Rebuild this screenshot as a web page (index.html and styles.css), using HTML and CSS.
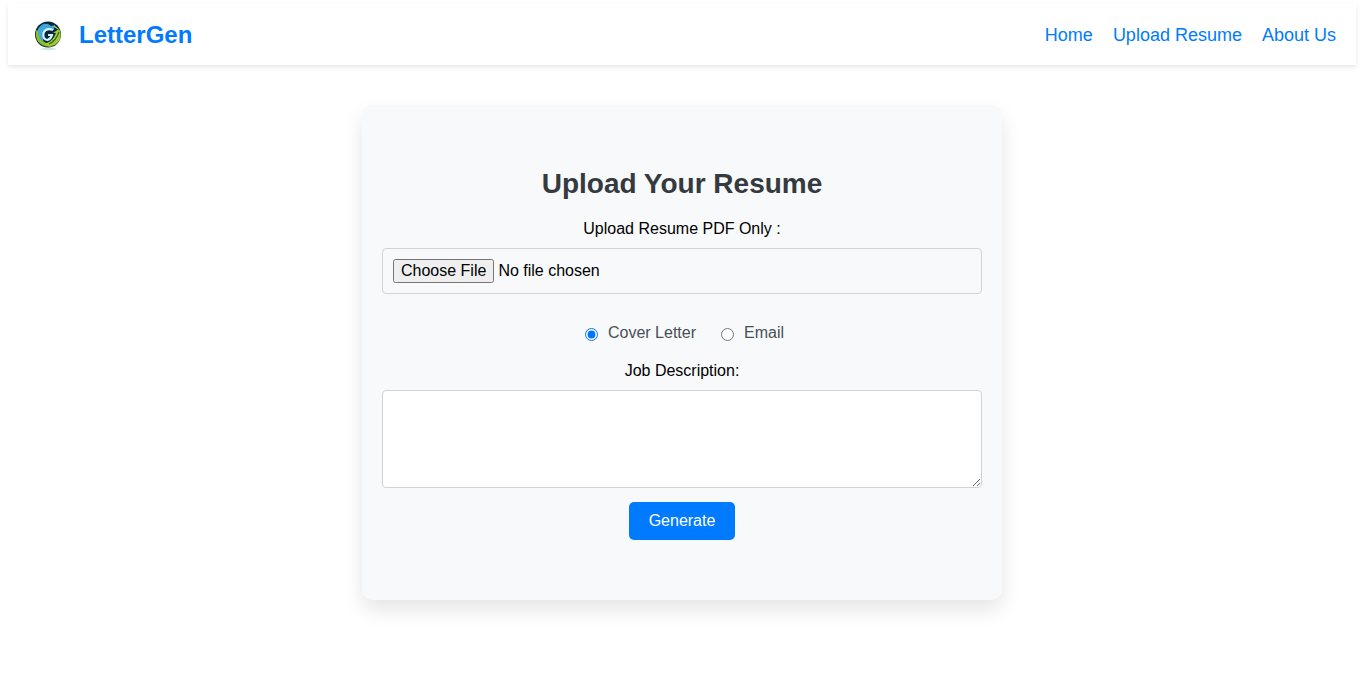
FILE: index.html
```html
<!DOCTYPE html>
<html lang="en">
<head>
<meta charset="utf-8">
<title>LetterGen</title>
<link rel="stylesheet" href="styles.css">
</head>
<body>
<header class="navbar">
  <a class="brand" href="#">
    <svg class="logo" viewBox="0 0 41 41" aria-hidden="true">
      <ellipse cx="20.500" cy="35" rx="8" ry="1.200" fill="#cfe6ea"/>
      <circle cx="20" cy="20.500" r="13" fill="#08253a"/>
      <path d="M8.500 16 L12 17 Q11 25 18 29 L24 32.500 Q14 34 9 26 Q7 20 8.500 16Z" fill="#8fbe28"/>
      <path d="M10 15 Q14 8.500 20 10 L23 12 L27 11 L26 16 Q19 14 16 19 L15 28 Q9 22 10 15Z" fill="#3fa6d8"/>
      <path d="M25 16 Q18 13.500 15.500 19 Q14.500 25.500 19.500 26 Q23 25 24 21 H20" fill="none" stroke="#d5f3fc" stroke-width="2.200"/>
      <path d="M31 15 Q34.500 21 31 27 Q27 33 20 32 L17 29.500 Q23 28 26 23 L28 19 L25 19 Z" fill="#a3cb2c"/>
      <path d="M31 18 Q28 27 21 30" fill="none" stroke="#276338" stroke-width="1.200"/>
      <path d="M26 12 L30 15" stroke="#b7cb55" stroke-width="1.200"/>
    </svg>
    <span class="brand-name">LetterGen</span>
  </a>
  <nav class="links">
    <a href="#">Home</a>
    <a href="#">Upload Resume</a>
    <a href="#">About Us</a>
  </nav>
</header>
<main class="card">
  <h1 class="title">Upload Your Resume</h1>
  <form class="form">
    <label class="label" for="resume">Upload Resume PDF Only :</label>
    <input class="file" type="file" id="resume" accept=".pdf">
    <div class="choices">
      <label class="choice"><input class="radio" type="radio" name="kind" checked><span>Cover Letter</span></label>
      <label class="choice"><input class="radio" type="radio" name="kind"><span>Email</span></label>
    </div>
    <label class="label" for="job">Job Description:</label>
    <textarea class="job" id="job" rows="4"></textarea>
    <button class="generate" type="button">Generate</button>
  </form>
</main>
</body>
</html>
```
FILE: styles.css
```css
* { box-sizing: border-box; }
body { min-height: 100vh; margin: 0; padding: 4px 6px 40px 8px; font-family: "Liberation Sans", Arial, sans-serif; font-size: 16px; background: #fff; }
.navbar { display: flex; justify-content: space-between; align-items: center; padding: 10px 20px; background: #fff; box-shadow: 0 2px 4px rgba(0,0,0,.1); }
.brand { display: flex; align-items: center; gap: 10px; text-decoration: none; color: #007bff; }
.logo { width: 41px; height: 41px; }
.brand-name { font-size: 24px; font-weight: bold; }
.links { display: flex; gap: 20px; }
.links a { color: #007bff; font-size: 18px; line-height: 22px; text-decoration: none; }
.card { max-width: 640px; margin: 40px auto 0; padding: 60px 20px; background: #f8f9fa; border-radius: 10px; box-shadow: 0 10px 20px rgba(0,0,0,.1); }
.title { margin: 0 0 16px; font-size: 28px; line-height: 38px; text-align: center; color: #343a40; }
.form { display: flex; flex-direction: column; align-items: center; }
.label { line-height: 20px; margin-bottom: 9px; }
.file { width: 100%; padding: 10px; border: 1px solid #ced4da; border-radius: 4px; font: inherit; }
.choices { display: flex; gap: 20px; margin: 30px 0 19px; line-height: 18px; color: #495057; }
.choice { display: flex; gap: 10px; }
.radio { margin: 3px 0 0 5px; }
.job { width: 100%; height: 98px; padding: 10px; border: 1px solid #ced4da; border-radius: 4px; font: inherit; resize: vertical; }
.generate { margin-top: 14px; padding: 10px 20px; border: 0; border-radius: 5px; background: #007bff; color: #fff; font: inherit; }
```
